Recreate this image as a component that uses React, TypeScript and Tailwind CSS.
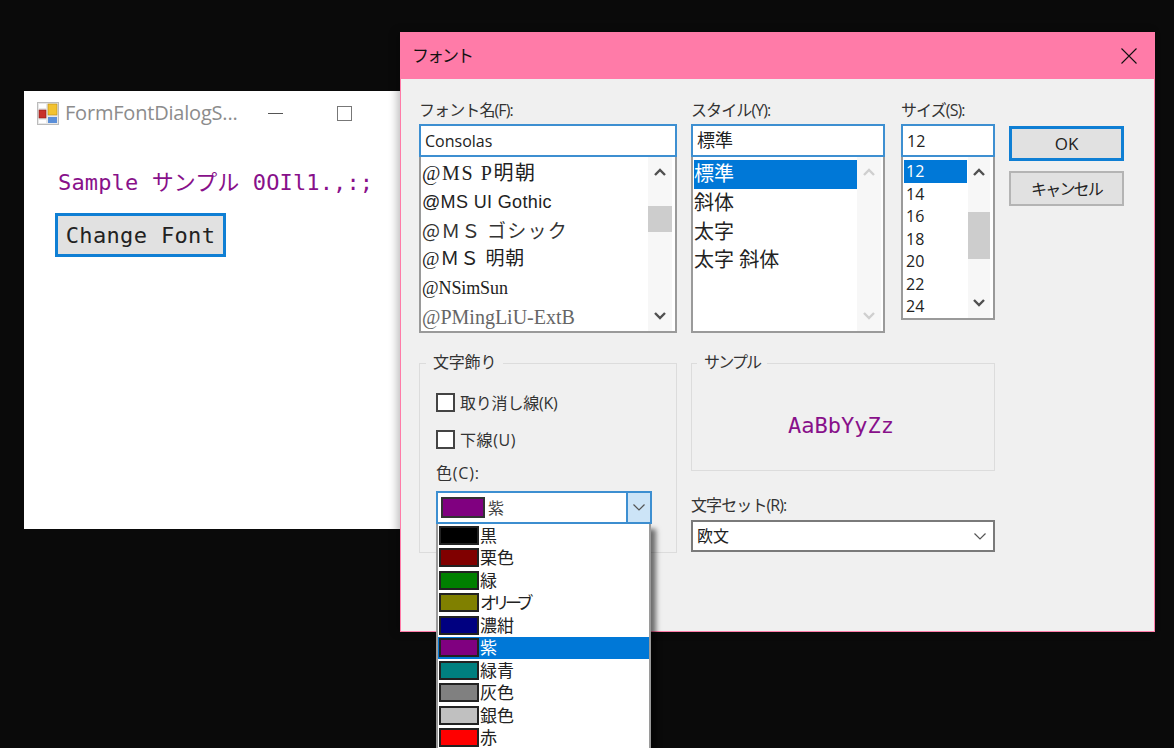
import React from "react";

const ui = "font-['Open_Sans','Noto_Sans_CJK_JP',sans-serif]";
const mono = "font-['DejaVu_Sans_Mono','Noto_Sans_CJK_JP',monospace]";

function Up({ className = "" }: { className?: string }) {
  return (
    <svg width="14" height="10" viewBox="0 0 14 10" className={className} fill="none" stroke="currentColor" strokeWidth="2.4">
      <path d="M2 8 L7 3 L12 8" />
    </svg>
  );
}
function Down({ className = "" }: { className?: string }) {
  return (
    <svg width="14" height="10" viewBox="0 0 14 10" className={className} fill="none" stroke="currentColor" strokeWidth="2.4">
      <path d="M2 2 L7 7 L12 2" />
    </svg>
  );
}
function Caret() {
  return (
    <svg width="14" height="9" viewBox="0 0 14 9" fill="none" stroke="#555" strokeWidth="1.2">
      <path d="M1.5 1.5 L7 7 L12.5 1.5" />
    </svg>
  );
}

function Scrollbar({
  w = "w-[24px]",
  before,
  thumb,
  disabled,
}: {
  w?: string;
  before: string;
  thumb: string;
  disabled?: boolean;
}) {
  const c = disabled ? "text-[#cfcfcf]" : "text-[#505050]";
  return (
    <div className={`${w} h-full shrink-0 bg-[#f7f7f7] flex flex-col items-center justify-between py-[3px] relative ${c}`}>
      <div className="h-[24px] flex items-center"><Up /></div>
      {!disabled && <div className={`absolute left-0 right-0 bg-[#cdcdcd] ${before} ${thumb}`} />}
      <div className="h-[24px] flex items-center"><Down /></div>
    </div>
  );
}

const fontRows = [
  { t: "@MS P明朝", c: "font-['Liberation_Serif','Noto_Sans_CJK_JP',serif] text-[20px] text-[#222] tracking-[1.6px]" },
  { t: "@MS UI Gothic", c: "font-['Liberation_Sans','Noto_Sans_CJK_JP',sans-serif] text-[18px] text-[#222] tracking-[0.35px]" },
  { t: "@ＭＳ ゴシック", c: "font-['Noto_Sans_CJK_JP',sans-serif] text-[19px] text-[#333] tracking-[1.2px]" },
  { t: "@ＭＳ 明朝", c: "font-['Liberation_Serif','Noto_Sans_CJK_JP',serif] text-[19px] text-[#222] tracking-[0.8px]" },
  { t: "@NSimSun", c: "font-['Liberation_Serif',serif] text-[#222] text-[18px] tracking-[-0.1px]" },
  { t: "@PMingLiU-ExtB", c: "font-['Liberation_Serif',serif] text-[#666] text-[20px]" },
];

const colors = [
  ["黒", "#000000"],
  ["栗色", "#800000"],
  ["緑", "#008000"],
  ["オリーブ", "#808000"],
  ["濃紺", "#000080"],
  ["紫", "#800080"],
  ["緑青", "#008080"],
  ["灰色", "#808080"],
  ["銀色", "#c0c0c0"],
  ["赤", "#ff0000"],
];

function Field({ value, size = "text-[16px]" }: { value: string; size?: string }) {
  return (
    <div className={`h-[33px] border-2 border-[#3d8fd1] bg-white flex items-center pl-[4px] text-[#222] ${size}`}>
      {value}
    </div>
  );
}

function Label({ children }: { children: React.ReactNode }) {
  return <div className="h-[24px] leading-[20px] text-[16px] tracking-[-0.9px] text-[#333]">{children}</div>;
}

function Check({ label, tracking }: { label: string; tracking: string }) {
  return (
    <div className={`flex items-center gap-[5px] h-[19px] text-[16px] text-[#333] ${tracking}`}>
      <div className="w-[19px] h-[19px] border-2 border-[#444] bg-white" />
      <span>{label}</span>
    </div>
  );
}

export default function App() {
  return (
    <div className={`relative w-[1174px] h-[748px] overflow-hidden bg-[#0a0a0a] ${ui}`}>
      {/* background form window */}
      <div className="absolute left-[24px] top-[91px] w-[420px] h-[438px] bg-white">
        <div className="h-[44px] flex items-center pl-[13px]">
          <svg width="22" height="23" viewBox="0 0 22 23" className="shrink-0">
            <rect x="0.5" y="0.5" width="21" height="22" fill="#e8e8e8" stroke="#bbb" />
            <rect x="11" y="2" width="9" height="11" fill="#f2c230" stroke="#b98a10" strokeWidth="0.6" />
            <rect x="2" y="8" width="7" height="8" fill="#c8302a" stroke="#8a1a16" strokeWidth="0.6" />
            <rect x="11" y="15" width="9" height="6" fill="#5b8fd8" />
            <rect x="2" y="2" width="7" height="4" fill="#fff" />
            <rect x="2" y="18" width="7" height="3" fill="#fff" />
          </svg>
          <span className="ml-[6px] text-[20px] text-[#8c8c8c] tracking-[-0.2px] w-[203px] whitespace-nowrap">FormFontDialogS...</span>
          <div className="w-[15px] h-px bg-[#555]" />
          <div className="ml-[54px] w-[15px] h-[15px] border border-[#777]" />
        </div>
        <div className={`pl-[31px] pt-[33px] ${mono}`}>
          <div className="ml-[3px] h-[30px] leading-[30px] text-[22px] tracking-[0.13px] text-[#88108a] whitespace-nowrap">Sample サンプル 0OIl1.,:;</div>
          <button className="mt-[15px] block w-[171px] h-[44px] border-[3px] border-[#0f7fd4] bg-[#e1e1e1] text-[22px] tracking-[0.35px] text-[#222] text-center">
            Change Font
          </button>
        </div>
      </div>

      {/* font dialog */}
      <div className="absolute left-[400px] top-[32px] w-[755px] h-[600px] border border-[#ff7ba8] bg-[#f0f0f0] shadow-[-3px_0_8px_rgba(0,0,0,0.25)]">
        <div className="h-[46px] bg-[#ff7ba8] flex items-center justify-between pl-[11px] pr-[17px] text-[17px] tracking-[-2px] text-[#111]">
          <span>フォント</span>
          <svg width="16" height="16" viewBox="0 0 16 16" stroke="#111" strokeWidth="1.1" fill="none">
            <path d="M0.5 0.5 L15.5 15.5 M15.5 0.5 L0.5 15.5" />
          </svg>
        </div>

        <div className="pl-[18px] pt-[21px]">
          <div className="flex items-start">
            <div className="w-[258px]">
              <Label>フォント名(F):</Label>
              <Field value="Consolas" />
              <div className="h-[176px] border-2 border-t-0 border-[#9a9a9a] bg-white flex">
                <div className="flex-1 pl-px pt-[2px]">
                  {fontRows.map((r) => (
                    <div key={r.t} className={`h-[28.7px] flex items-center whitespace-nowrap ${r.c}`}>{r.t}</div>
                  ))}
                </div>
                <div className="mr-[3px] h-full">
                  <Scrollbar before="top-[49px]" thumb="h-[26px]" />
                </div>
              </div>
            </div>

            <div className="w-[194px] ml-[14px]">
              <Label>スタイル(Y):</Label>
              <Field value="標準" size="text-[18px]" />
              <div className="h-[176px] border-2 border-t-0 border-[#9a9a9a] bg-white flex">
                <div className="flex-1 pl-px pt-[3px] text-[20px] text-[#222]">
                  <div className="h-[28.7px] flex items-center bg-[#0078d7] text-white">標準</div>
                  <div className="h-[28.7px] flex items-center">斜体</div>
                  <div className="h-[28.7px] flex items-center">太字</div>
                  <div className="h-[28.7px] flex items-center">太字 斜体</div>
                </div>
                <div className="mr-[2px] h-full">
                  <Scrollbar disabled before="" thumb="" />
                </div>
              </div>
            </div>

            <div className="w-[94px] ml-[16px]">
              <Label>サイズ(S):</Label>
              <Field value="12" />
              <div className="h-[163px] border-2 border-t-0 border-[#9a9a9a] bg-white flex">
                <div className="flex-1 pl-px pt-[3px] text-[16px] text-[#222]">
                  {["12", "14", "16", "18", "20", "22", "24"].map((s, i) => (
                    <div key={s} className={`h-[22.5px] flex items-center pl-[2px] ${i === 0 ? "bg-[#0078d7] text-white" : ""}`}>{s}</div>
                  ))}
                </div>
                <div className="mr-[3px] ml-px h-full">
                  <Scrollbar w="w-[22px]" before="top-[55px]" thumb="h-[47px]" />
                </div>
              </div>
            </div>

            <div className="w-[115px] ml-[14px] pt-[26px] flex flex-col gap-[10px]">
              <button className="h-[35px] border-[3px] border-[#0f7fd4] bg-[#e1e1e1] text-[17px] text-[#222]">OK</button>
              <button className="h-[35px] border-2 border-[#b4b4b4] bg-[#e1e1e1] text-[16px] tracking-[-1.8px] text-[#222]">キャンセル</button>
            </div>
          </div>

          <div className="flex items-start mt-[18px]">
            <fieldset className="w-[258px] h-[202px] border border-[#dcdcdc] pl-[16px]">
              <legend className="ml-[-10px] px-[7px] h-[24px] leading-[22px] text-[16px] tracking-[-0.2px] text-[#333]">文字飾り</legend>
              <div className="pt-[18px]"><Check label="取り消し線(K)" tracking="tracking-[-0.2px]" /></div>
              <div className="pt-[18px]"><Check label="下線(U)" tracking="tracking-[0.6px]" /></div>
              <div className="pt-[14px] h-[42px] leading-[20px] text-[16px] tracking-[0.8px] text-[#333]">色(C):</div>
              <div className="relative w-[216px] z-10">
                <div className="h-[33px] border-2 border-[#3d8fd1] bg-white flex items-center text-[16px] text-[#444]">
                  <div className="ml-[3px] w-[44px] h-[21px] bg-[#800080] border-2 border-[#333]" />
                  <span className="ml-[3px] flex-1">紫</span>
                  <div className="w-[24px] h-full bg-[#cce4f7] border-l-2 border-[#3d8fd1] flex items-center justify-center"><Caret /></div>
                </div>
                <div className="absolute top-full left-0 w-[215px] border-x-2 border-[#9a9a9a] bg-white shadow-[5px_5px_5px_rgba(0,0,0,0.55)] text-[17px] text-[#222]">
                  {colors.map(([name, hex]) => (
                    <div key={name} className={`h-[22.5px] flex items-center ${name === "紫" ? "bg-[#0078d7] text-white" : ""}`}>
                      <div className="ml-px w-[40px] h-[19px] border-2 border-[#222]" style={{ backgroundColor: hex }} />
                      <span className={`ml-px leading-none whitespace-nowrap ${name === "オリーブ" ? "tracking-[-4.5px]" : ""}`}>{name}</span>
                    </div>
                  ))}
                </div>
              </div>
            </fieldset>

            <div className="w-[304px] ml-[14px]">
              <fieldset className="h-[120px] border border-[#dcdcdc]">
                <legend className="ml-[5px] px-[7px] h-[24px] leading-[22px] text-[16px] tracking-[-1.8px] text-[#333]">サンプル</legend>
                <div className={`h-[84px] pt-[16px] pr-[4px] flex items-center justify-center text-[22px] text-[#88108a] ${mono}`}>AaBbYyZz</div>
              </fieldset>
              <div className="mt-[24px] h-[25px] leading-[20px] text-[16px] tracking-[-0.9px] text-[#333]">文字セット(R):</div>
              <div className="h-[32px] border-2 border-[#7a7a7a] bg-white flex items-center justify-between pl-[4px] pr-[6px] text-[16px] text-[#222]">
                <span>欧文</span>
                <Caret />
              </div>
            </div>
          </div>
        </div>
      </div>
    </div>
  );
}
